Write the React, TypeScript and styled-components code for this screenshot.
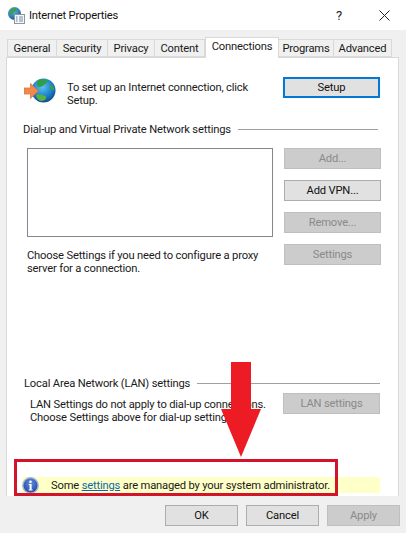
import React from 'react';
import styled, { createGlobalStyle } from 'styled-components';

const GlobalStyle = createGlobalStyle`
  html, body {
    margin: 0;
    padding: 0;
    background: #f0f0f0;
  }
  body {
    font-family: Roboto, Lato, "Liberation Sans", sans-serif;
    font-size: 11.2px;
    letter-spacing: -0.18px;
    color: #1a1a1a;
  }
`;

const tabs = ['General', 'Security', 'Privacy', 'Content', 'Connections', 'Programs', 'Advanced'];
const tabWidths = [50, 51, 47, 50, 74, 55, 58];

function GlobeIcon() {
    return (
        <svg width="32" height="26" viewBox="0 0 32 26">
            <defs>
                <radialGradient id="sea" cx="0.45" cy="0.35" r="0.7">
                    <stop offset="0" stopColor="#5cc4f0" />
                    <stop offset="0.6" stopColor="#1a7fc8" />
                    <stop offset="1" stopColor="#12427f" />
                </radialGradient>
            </defs>
            <circle cx="19.5" cy="12.5" r="12" fill="url(#sea)" />
            <path d="M14 2c3-1.5 7-1.5 9 0 1 2-1 4-3 4.500-1 2-4 3-6 2-1.500-1.500-1-4.500 0-6.500z" fill="#2f9e46" />
            <path d="M12 17c3-1 7 0 10 1.500 1 1.500-1 4-4 4.500-3 0-5-2-6-6z" fill="#58b33e" />
            <path d="M26 6c2 1 4 3 4.500 6-1 1-3 0-4-2-.5-1.500-1-3-.5-4z" fill="#3aa14a" />
            <path d="M0 10h6.500V5.500L14.500 13l-8 7.500V16H0z" fill="#f08a4b" stroke="#d96f35" strokeWidth="0.7" />
        </svg>
    );
}

function TitleIcon() {
    return (
        <svg width="17" height="17" viewBox="0 0 17 17">
            <defs>
                <radialGradient id="titleSea" cx="0.4" cy="0.3" r="0.8">
                    <stop offset="0" stopColor="#58bde8" />
                    <stop offset="1" stopColor="#14508f" />
                </radialGradient>
            </defs>
            <circle cx="6.500" cy="6.500" r="6.500" fill="url(#titleSea)" />
            <path d="M3 2c2-1.500 5-1.500 6 0 0 2-2 3-3 3-1 2-3 3-4 2-.5-2 0-4 1-5z" fill="#3f9e4e" />
            <rect x="6.500" y="7.500" width="10" height="9" fill="#f7f7f7" stroke="#8a96a3" strokeWidth="1" />
            <path d="M8 10h1.500M8 12h1.500M8 14h1.500" stroke="#4a84b8" strokeWidth="1" />
            <path d="M11 10h4M11 12h4M11 14h4" stroke="#7d8b99" strokeWidth="1" />
        </svg>
    );
}

function InfoIcon() {
    return (
        <svg width="17" height="17" viewBox="0 0 17 17">
            <defs>
                <radialGradient id="info" cx="0.5" cy="0.35" r="0.7">
                    <stop offset="0" stopColor="#5d8fe0" />
                    <stop offset="1" stopColor="#1c3f9c" />
                </radialGradient>
            </defs>
            <circle cx="8.500" cy="8.500" r="7.700" fill="url(#info)" stroke="#a9b6cf" strokeWidth="1.400" />
            <circle cx="8.500" cy="4.800" r="1.300" fill="#fff" />
            <path d="M6.800 7h2.800v5.400h1v1.100H6.600v-1.100h1V8.100h-.8z" fill="#fff" />
        </svg>
    );
}

export default function App() {
    return (
        <Dialog>
            <GlobalStyle />
            <TitleBar>
                <TitleIcon />
                <TitleText>Internet Properties</TitleText>
                <HelpButton>?</HelpButton>
                <CloseButton>
                    <svg width="11" height="11" viewBox="0 0 11 11">
                        <path d="M.5.5l10 10M10.500.5l-10 10" stroke="#222" strokeWidth="1" fill="none" />
                    </svg>
                </CloseButton>
            </TitleBar>

            <TabStrip>
                {tabs.map((t, i) => (
                    <Tab key={t} $active={t === 'Connections'} style={{ width: tabWidths[i] }}>
                        {t}
                    </Tab>
                ))}
            </TabStrip>

            <Panel>
                <SetupRow>
                    <GlobeSlot>
                        <GlobeIcon />
                    </GlobeSlot>
                    <SetupText>To set up an Internet connection, click Setup.</SetupText>
                    <Button $focused>Setup</Button>
                </SetupRow>

                <GroupHeading $left={17} $top={14}>
                    <span>Dial-up and Virtual Private Network settings</span>
                    <Rule $right={20} />
                </GroupHeading>

                <VpnGrid>
                    <ListBox />
                    <ButtonStack>
                        <Button $disabled>Add...</Button>
                        <Button>Add VPN...</Button>
                        <Button $disabled>Remove...</Button>
                        <Button $disabled>Settings</Button>
                    </ButtonStack>
                    <ProxyText>Choose Settings if you need to configure a proxy server for a connection.</ProxyText>
                </VpnGrid>

                <GroupHeading $left={18} $top={100}>
                    <span>Local Area Network (LAN) settings</span>
                    <Rule $right={18} />
                </GroupHeading>

                <LanRow>
                    <LanText>
                        LAN Settings do not apply to dial-up connections.
                        <br />
                        Choose Settings above for dial-up settings.
                    </LanText>
                    <Button $disabled>LAN settings</Button>
                </LanRow>

                <Notice>
                    <InfoIcon />
                    <NoticeText>
                        Some <a href="#settings">settings</a> are managed by your system administrator.
                    </NoticeText>
                </Notice>
            </Panel>

            <Footer>
                <Button>OK</Button>
                <Button>Cancel</Button>
                <Button $disabled>Apply</Button>
            </Footer>

            <Highlight />
            <ArrowOverlay width="42" height="96" viewBox="0 0 42 96">
                <path d="M11 0h20v47h10L21 95 1 47h10z" fill="#ed1c24" />
            </ArrowOverlay>
        </Dialog>
    );
}

const Dialog = styled.div`
  position: relative;
  width: 406px;
  height: 533px;
  overflow: hidden;
  background: #f0f0f0;
`;
const TitleBar = styled.div`
  display: flex;
  align-items: center;
  height: 30px;
  padding-left: 8px;
  background: #fff;
`;
const TitleText = styled.div`
  margin-left: 4px;
  flex: 1;
  color: #111;
`;
const HelpButton = styled.div`
  width: 20px;
  margin-right: 30px;
  text-align: center;
  font-size: 13px;
  color: #222;
`;
const CloseButton = styled.div`
  display: flex;
  margin-right: 16px;
`;
const TabStrip = styled.div`
  display: flex;
  align-items: flex-end;
  height: 27px;
  padding-left: 7px;
  position: relative;
  z-index: 1;
`;
const Tab = styled.div<{ $active?: boolean }>`
  box-sizing: border-box;
  height: ${(p) => (p.$active ? '21px' : '18px')};
  margin-bottom: ${(p) => (p.$active ? '-1px' : '0')};
  line-height: ${(p) => (p.$active ? '17px' : '18px')};
  text-align: center;
  white-space: nowrap;
  background: ${(p) => (p.$active ? '#fff' : '#f0f0f0')};
  border: 1px solid #d9d9d9;
  border-bottom: ${(p) => (p.$active ? 'none' : '1px solid #d9d9d9')};
  border-left: ${(p) => (p.$active ? '1px solid #d9d9d9' : 'none')};
  &:first-child {
    border-left: 1px solid #d9d9d9;
  }
`;
const Panel = styled.div`
  box-sizing: border-box;
  display: flex;
  flex-direction: column;
  width: 393px;
  height: 439px;
  margin-left: 6px;
  background: #fff;
  border: 1px solid #d9d9d9;
  border-bottom: none;
`;
const SetupRow = styled.div`
  display: flex;
  align-items: flex-start;
  margin-top: 19px;
  padding-right: 17px;
`;
const GlobeSlot = styled.div`
  display: flex;
  width: 43px;
  margin: 1px 0 0 17px;
`;
const SetupText = styled.div`
  box-sizing: border-box;
  width: 216px;
  line-height: 13px;
  padding: 4px 20px 0 0;
  flex: none;
`;
const Button = styled.div<{ $disabled?: boolean; $focused?: boolean }>`
  box-sizing: border-box;
  flex: none;
  width: 97px;
  height: 21px;
  line-height: ${(p) => (p.$focused ? '17px' : '19px')};
  text-align: center;
  white-space: nowrap;
  color: ${(p) => (p.$disabled ? '#8a8a8a' : '#111')};
  background: ${(p) => (p.$disabled ? '#cccccc' : '#e1e1e1')};
  border: ${(p) => (p.$focused ? '2px solid #0078d7' : p.$disabled ? '1px solid #bfbfbf' : '1px solid #adadad')};
`;
const GroupHeading = styled.div<{ $left: number; $top?: number }>`
  display: flex;
  align-items: center;
  margin: ${(p) => p.$top ?? 19}px 0 0 ${(p) => p.$left - 1}px;
  height: 16px;
  white-space: nowrap;
`;
const Rule = styled.div<{ $right: number }>`
  flex: 1;
  height: 1px;
  margin: 0 ${(p) => p.$right}px 0 7px;
  background: #a0a0a0;
`;
const VpnGrid = styled.div`
  display: grid;
  grid-template-columns: 246px 97px;
  column-gap: 11px;
  margin: 11px 0 0 20px;
`;
const ListBox = styled.div`
  box-sizing: border-box;
  height: 89px;
  background: #fff;
  border: 1px solid #828790;
`;
const ButtonStack = styled.div`
  grid-row: span 2;
  display: flex;
  flex-direction: column;
  gap: 11px;
`;
const ProxyText = styled.div`
  line-height: 13px;
  margin-top: 12px;
`;
const LanRow = styled.div`
  display: flex;
  align-items: flex-start;
  margin-top: 2px;
  padding-left: 23px;
`;
const LanText = styled.div`
  width: 253px;
  flex: none;
  line-height: 13px;
  padding-top: 5px;
  white-space: nowrap;
`;
const Notice = styled.div`
  display: flex;
  align-items: center;
  height: 16px;
  margin: 53px 18px 0 15px;
  background: #ffffc8;
`;
const NoticeText = styled.div`
  margin-left: 12px;
  white-space: nowrap;
  a {
    color: #0a6aa8;
  }
`;
const Footer = styled.div`
  display: flex;
  gap: 8px;
  justify-content: flex-end;
  padding: 9px 6px 0 0;
  ${Button} {
    width: 73px;
  }
`;
const Highlight = styled.div`
  position: absolute;
  left: 14px;
  top: 459px;
  width: 324px;
  height: 37px;
  box-sizing: border-box;
  border: 3px solid #d2132a;
`;
const ArrowOverlay = styled.svg`
  position: absolute;
  left: 220px;
  top: 362px;
`;
